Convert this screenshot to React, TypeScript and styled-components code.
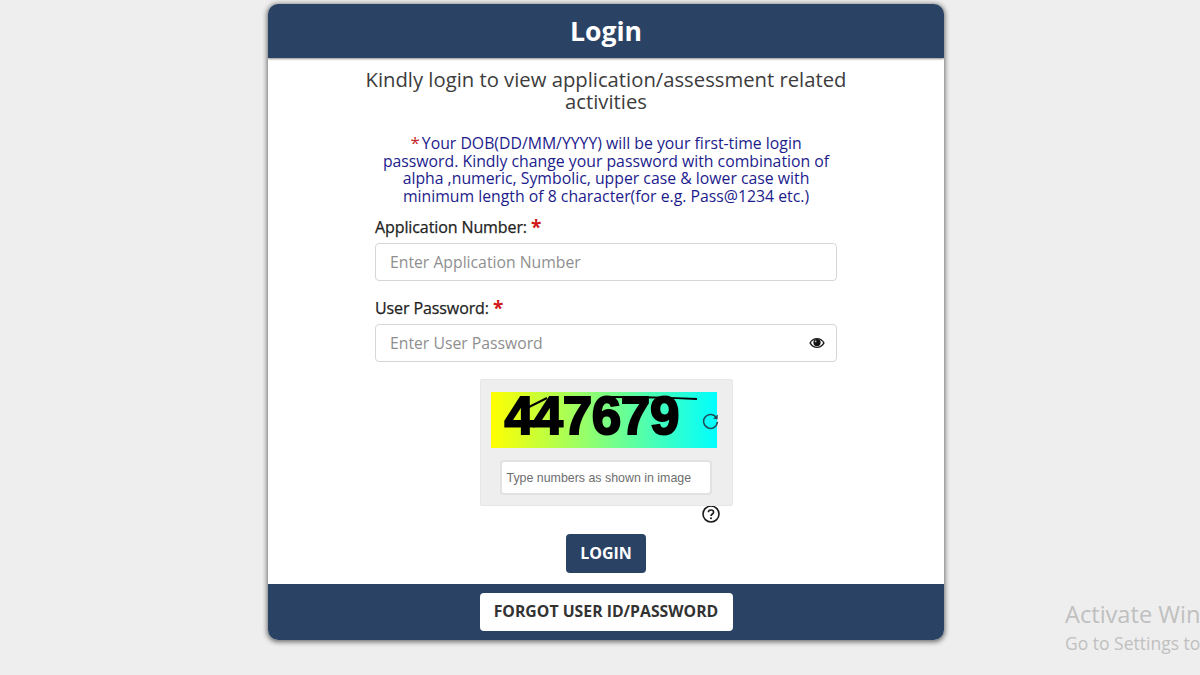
import React from "react";
import styled, { createGlobalStyle } from "styled-components";

const Global = createGlobalStyle`
  html, body { margin: 0; padding: 0; height: 100%; background: #eeeeee; overflow: hidden; }
  body { font-family: "Open Sans", "Noto Sans", sans-serif; }
  * { box-sizing: border-box; }
`;

const Page = styled.div`
  width: 1200px;
  height: 675px;
  padding: 4px 0 0 12px;
  display: flex;
  justify-content: center;
  position: relative;
  background: #eeeeee;
  overflow: hidden;
`;

const Card = styled.main`
  width: 676px;
  height: 636px;
  display: flex;
  flex-direction: column;
  background: #fff;
  border-radius: 10px;
  overflow: hidden;
  box-shadow: 0 1px 5px 1px rgba(0, 0, 0, 0.55);
`;

const Header = styled.header`
  height: 54px;
  flex: none;
  display: flex;
  align-items: center;
  justify-content: center;
  background: #2a4365;
  color: #fff;
  font-size: 26.6px;
  font-weight: 700;
  box-shadow: 0 1px 2px rgba(0, 0, 0, 0.45);
`;

const Body = styled.div`
  flex: 1;
  display: flex;
  flex-direction: column;
  align-items: center;
  padding-top: 9.5px;
`;

const Intro = styled.h2`
  width: 500px;
  margin: 0;
  font-size: 20.25px;
  font-weight: 400;
  line-height: 22px;
  text-align: center;
  color: #3c3c3c;
`;

const Note = styled.p`
  width: 461px;
  margin: 23.5px 0 0;
  font-size: 15.8px;
  line-height: 17.6px;
  text-align: center;
  color: #1c1c8c;
`;

const Star = styled.span`
  margin-right: 2px;
  font-size: 17px;
  line-height: 0;
  color: #c62828;
`;

const Field = styled.div`
  width: 462px;
  margin-top: ${(p: { $top: number }) => p.$top}px;
  display: flex;
  flex-direction: column;
`;

const Label = styled.label`
  height: 24px;
  font-size: 16px;
  font-weight: 500;
  line-height: 24px;
  color: #222222;
  letter-spacing: -0.1px;
  -webkit-text-stroke: 0.25px #222222;
`;

const LabelStar = styled.sup`
  margin-left: 4px;
  font-size: 19px;
  font-weight: 700;
  line-height: 0;
  color: #d01818;
  -webkit-text-stroke: 0;
  vertical-align: -1px;
`;

const InputBox = styled.div`
  height: 38px;
  margin-top: 4px;
  padding: 0 11px 0 14px;
  display: flex;
  align-items: center;
  justify-content: space-between;
  background: #fff;
  border: 1px solid #d6d6d6;
  border-radius: 4px;
`;

const Placeholder = styled.span`
  font-size: 15.75px;
  color: #8f8f8f;
`;

const CaptchaBox = styled.section`
  position: relative;
  width: 253px;
  height: 127px;
  margin-top: 17px;
  padding: 12px 0 0 10px;
  background: #eeeeee;
  border: 1px solid #e6e6e6;
  border-radius: 2px;
`;

const CaptchaImage = styled.div`
  position: relative;
  width: 226px;
  height: 56px;
  padding-left: 14px;
  background: linear-gradient(90deg, #ffff00 0%, #00ffff 100%);
  font-family: "Liberation Sans", Arial, sans-serif;
  font-size: 53px;
  font-weight: 700;
  line-height: 47px;
  color: #000;
  letter-spacing: -0.4px;
  -webkit-text-stroke: 2px #000;
`;

const StrikeSvg = styled.svg`
  position: absolute;
  left: 0;
  top: 0;
`;

const RefreshSvg = styled.svg`
  position: absolute;
  left: 221px;
  top: 32px;
`;

const CaptchaInput = styled.div`
  width: 212px;
  height: 35px;
  margin: 12px 0 0 9px;
  padding-left: 5px;
  display: flex;
  align-items: center;
  background: #fff;
  border: 2px solid #e2e2e2;
  border-radius: 4px;
  font-family: "Liberation Sans", Arial, sans-serif;
  font-size: 12.4px;
  color: #6e6e6e;
`;

const HelpRow = styled.div`
  width: 253px;
  height: 28px;
  padding: 0 13px 0 0;
  display: flex;
  justify-content: flex-end;
  align-items: flex-start;
`;

const HelpIcon = styled.svg`
  margin-top: -1px;
`;

const LoginButton = styled.button`
  width: 80px;
  height: 39px;
  padding: 0 0 2px;
  border: 0;
  border-radius: 4px;
  background: #2a4365;
  color: #fff;
  font-family: inherit;
  font-size: 16px;
  font-weight: 700;
`;

const Footer = styled.footer`
  height: 56px;
  flex: none;
  display: flex;
  justify-content: center;
  padding-top: 9px;
  background: #2a4365;
`;

const ForgotButton = styled.button`
  width: 253px;
  height: 38px;
  padding: 0 0 3px;
  border: 0;
  border-radius: 4px;
  background: #fff;
  color: #333333;
  font-family: inherit;
  font-size: 15.8px;
  font-weight: 700;
`;

const Watermark = styled.aside`
  position: absolute;
  left: 1065px;
  top: 600px;
  white-space: nowrap;
  color: #c0c0c0;
`;

const WatermarkTitle = styled.div`
  font-size: 23.6px;
  line-height: 29px;
`;

const WatermarkSub = styled.div`
  font-size: 17.5px;
  line-height: 29px;
`;

export default function App() {
  return (
    <Page>
      <Global />
      <Card>
        <Header>Login</Header>
        <Body>
          <Intro>Kindly login to view application/assessment related activities</Intro>
          <Note>
            <Star>*</Star>Your DOB(DD/MM/YYYY) will be your first-time login password. Kindly change your password with combination of alpha ,numeric, Symbolic, upper case &amp; lower case with minimum length of 8 character(for e.g. Pass@1234 etc.)
          </Note>
          <Field $top={10}>
            <Label>Application Number:<LabelStar>*</LabelStar></Label>
            <InputBox><Placeholder>Enter Application Number</Placeholder></InputBox>
          </Field>
          <Field $top={15}>
            <Label>User Password:<LabelStar>*</LabelStar></Label>
            <InputBox>
              <Placeholder>Enter User Password</Placeholder>
              <svg width="16" height="12" viewBox="0 0 16 12">
                <path d="M0.3 6C2 2.6 4.8 1 8 1s6 1.6 7.7 5C14 9.4 11.2 11 8 11S2 9.4.3 6z" fill="#1c1c1c" />
                <path d="M1.9 6C3.4 3.6 5.5 2.3 8 2.3s4.6 1.3 6.1 3.7C12.6 8.4 10.5 9.7 8 9.7S3.4 8.4 1.9 6z" fill="#fff" />
                <circle cx="8" cy="5.6" r="3.6" fill="#111" />
                <circle cx="6.6" cy="4.4" r="0.9" fill="#bbb" />
              </svg>
            </InputBox>
          </Field>
          <CaptchaBox>
            <CaptchaImage>
              447679
              <StrikeSvg width="226" height="56" viewBox="0 0 226 56">
                <path d="M36 16 L56 6" stroke="#000" strokeWidth="2" fill="none" />
                <path d="M120 5 Q165 5 206 7" stroke="#000" strokeWidth="2" fill="none" />
              </StrikeSvg>
            </CaptchaImage>
            <RefreshSvg width="17" height="18" viewBox="0 0 17 18">
              <path d="M14.6 6.2 A6.9 6.9 0 1 0 15.4 9.8" stroke="#1f4a58" strokeWidth="1.5" fill="none" />
              <path d="M15.8 2.6 L15.6 7.4 L11 6.6 Z" fill="#1f4a58" />
            </RefreshSvg>
            <CaptchaInput>Type numbers as shown in image</CaptchaInput>
          </CaptchaBox>
          <HelpRow>
            <HelpIcon width="18" height="18" viewBox="0 0 18 18">
              <circle cx="9" cy="9" r="8" stroke="#1a1a1a" strokeWidth="1.6" fill="none" />
              <path d="M6.4 7.2 C6.4 4.2 11.6 4.2 11.6 7.2 C11.6 9 9 9 9 11" stroke="#1a1a1a" strokeWidth="1.6" fill="none" />
              <circle cx="9" cy="13.3" r="1" fill="#1a1a1a" />
            </HelpIcon>
          </HelpRow>
          <LoginButton>LOGIN</LoginButton>
        </Body>
        <Footer>
          <ForgotButton>FORGOT USER ID/PASSWORD</ForgotButton>
        </Footer>
      </Card>
      <Watermark>
        <WatermarkTitle>Activate Windows</WatermarkTitle>
        <WatermarkSub>Go to Settings to activate Windows.</WatermarkSub>
      </Watermark>
    </Page>
  );
}
